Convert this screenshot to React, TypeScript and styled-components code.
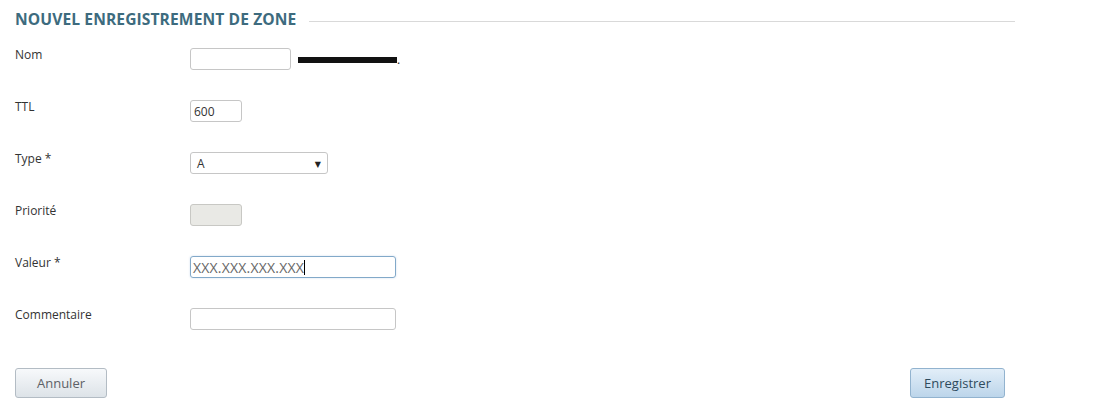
import React from "react";
import styled, { createGlobalStyle } from "styled-components";

const Global = createGlobalStyle`
  html, body { margin: 0; padding: 0; background: #ffffff; }
  body { font-family: "Open Sans", "DejaVu Sans", sans-serif; color: #333; }
  * { box-sizing: border-box; }
`;

const Page = styled.div`
  width: 1108px;
  height: 414px;
  padding: 8px 0 0 15px;
`;

const Fieldset = styled.div`
  width: 1000px;
`;

const Legend = styled.div`
  display: flex;
  align-items: center;
  gap: 13px;
  height: 22px;
`;

const LegendText = styled.span`
  font-family: "Open Sans", sans-serif;
  font-weight: 700;
  font-size: 15.6px;
  color: #3d6b7e;
  letter-spacing: 0.1px;
  white-space: nowrap;
`;

const LegendRule = styled.div`
  flex: 1;
  height: 1px;
  background: #d9d9d9;
  margin-top: 4px;
`;

const Rows = styled.div`
  display: flex;
  flex-direction: column;
  margin-top: 18px;
`;

const Row = styled.div`
  display: grid;
  grid-template-columns: 175px 1fr;
  height: 52px;
  align-items: start;
`;

const Label = styled.label`
  font-size: 12px;
  line-height: 14px;
  color: #333;
`;

const Field = styled.div`
  display: flex;
  align-items: center;
  gap: 7px;
`;

const Input = styled.input<{ $w: number }>`
  width: ${(p) => p.$w}px;
  height: 22px;
  border: 1px solid #c6c6c6;
  border-radius: 3px;
  padding: 0 3px;
  font-family: "Open Sans", sans-serif;
  font-size: 12px;
  color: #333;
  background: #fff;
  outline: none;
  &:disabled {
    background: #e9e9e5;
    border-color: #c8c8c4;
  }
`;

const Select = styled.div`
  width: 138px;
  height: 22px;
  border: 1px solid #c6c6c6;
  border-radius: 3px;
  display: flex;
  align-items: center;
  justify-content: space-between;
  padding: 0 6px;
  font-size: 12px;
  color: #333;
`;

const Arrow = styled.span`
  font-size: 8px;
  color: #222;
`;

const Redacted = styled.span`
  display: inline-flex;
  align-items: flex-end;
  font-size: 12px;
  color: #222;
`;

const Scribble = styled.span`
  display: inline-block;
  width: 99px;
  height: 6px;
  background: #111;
  margin-bottom: 5px;
`;

const Caret = styled.span`
  display: inline-block;
  width: 1px;
  height: 15px;
  background: #000;
`;

const ValueBox = styled.div`
  width: 206px;
  height: 22px;
  border: 1px solid #82a9c9;
  border-radius: 3px;
  display: flex;
  align-items: center;
  padding: 0 2px;
  font-size: 14px;
  letter-spacing: 0.2px;
  color: #666;
  box-shadow: 0 0 2px rgba(100, 150, 200, 0.35);
`;

const Actions = styled.div`
  display: flex;
  justify-content: space-between;
  width: 990px;
  margin-top: 8px;
`;

const Button = styled.button<{ $primary?: boolean }>`
  height: 30px;
  padding: 0 ${(p) => (p.$primary ? "13px" : "20px")};
  border-radius: 3px;
  font-family: "Open Sans", sans-serif;
  font-size: 13px;
  cursor: pointer;
  border: 1px solid ${(p) => (p.$primary ? "#92b3cf" : "#b3bcc4")};
  color: ${(p) => (p.$primary ? "#2e4b5d" : "#5d6166")};
  background: ${(p) =>
    p.$primary
      ? "linear-gradient(#e2eef8, #bcd5ea)"
      : "linear-gradient(#f7f9fb, #dde3e8)"};
  min-width: ${(p) => (p.$primary ? "95px" : "92px")};
`;

export default function App() {
  return (
    <Page>
      <Global />
      <Fieldset>
        <Legend>
          <LegendText>NOUVEL ENREGISTREMENT DE ZONE</LegendText>
          <LegendRule />
        </Legend>
        <Rows>
          <Row>
            <Label>Nom</Label>
            <Field>
              <Input $w={101} defaultValue="" />
              <Redacted>
                <Scribble />.
              </Redacted>
            </Field>
          </Row>
          <Row>
            <Label>TTL</Label>
            <Field>
              <Input $w={52} defaultValue="600" />
            </Field>
          </Row>
          <Row>
            <Label>Type *</Label>
            <Field>
              <Select>
                <span>A</span>
                <Arrow>▼</Arrow>
              </Select>
            </Field>
          </Row>
          <Row>
            <Label>Priorité</Label>
            <Field>
              <Input $w={52} disabled defaultValue="" />
            </Field>
          </Row>
          <Row>
            <Label>Valeur *</Label>
            <Field>
              <ValueBox>
                XXX.XXX.XXX.XXX
                <Caret />
              </ValueBox>
            </Field>
          </Row>
          <Row>
            <Label>Commentaire</Label>
            <Field>
              <Input $w={206} defaultValue="" />
            </Field>
          </Row>
        </Rows>
        <Actions>
          <Button>Annuler</Button>
          <Button $primary>Enregistrer</Button>
        </Actions>
      </Fieldset>
    </Page>
  );
}
